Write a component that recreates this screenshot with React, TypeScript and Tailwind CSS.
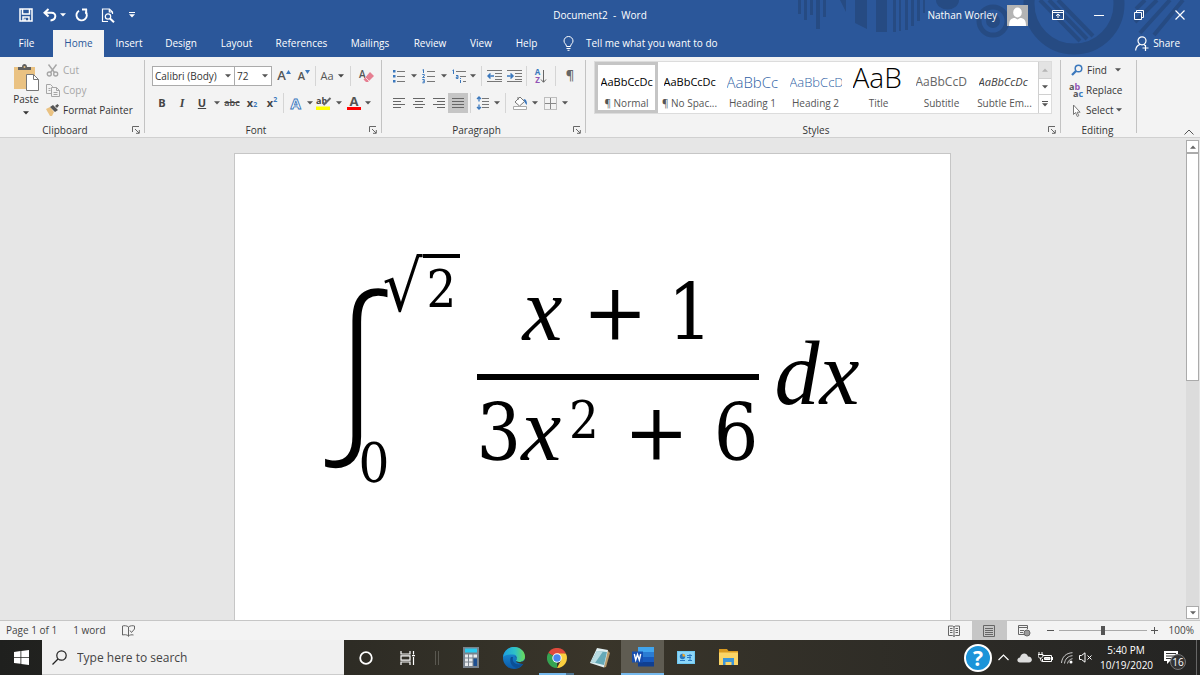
import type { ReactNode } from "react";

function Caret({ className = "" }: { className?: string }) {
  return (
    <svg className={className} width="6" height="4" viewBox="0 0 6 4" fill="currentColor" aria-hidden="true">
      <path d="M0 .3h6L3 3.6z" />
    </svg>
  );
}

function CaretButton({ label, w = "w-2.5" }: { label: string; w?: string }) {
  return (
    <button aria-label={label} className={`flex h-5 shrink-0 items-center justify-center text-[#555] ${w}`}>
      <Caret />
    </button>
  );
}

function Tool({ label, children, className = "w-5" }: { label: string; children: ReactNode; className?: string }) {
  return (
    <button aria-label={label} className={`flex h-5 shrink-0 items-center justify-center text-[#444] ${className}`}>
      {children}
    </button>
  );
}

function Sep({ className = "mx-1" }: { className?: string }) {
  return <span className={`h-5 w-px shrink-0 bg-[#d5d5d5] ${className}`} />;
}

function Launcher({ label }: { label: string }) {
  return (
    <button aria-label={label} className="flex h-3 w-3 items-center justify-center text-[#666]">
      <svg width="8" height="8" viewBox="0 0 8 8" fill="none" stroke="currentColor" aria-hidden="true">
        <path d="M.5 6V.5H7M3 3l4 4M7.3 4v3.3H4" />
      </svg>
    </button>
  );
}

function Group({ name, launcher = true, className, children }: { name: string; launcher?: boolean; className: string; children: ReactNode }) {
  return (
    <section aria-label={name} className={`flex shrink-0 pt-[3px] ${className}`}>
      <div className="flex min-w-0 grow flex-col">
        <div className="h-16 shrink-0">{children}</div>
        <div className="flex h-3 shrink-0 items-center">
          <span className="grow text-center text-[10px] leading-3 font-medium text-[#333]">{name}</span>
          {launcher && <Launcher label={`${name} settings`} />}
        </div>
      </div>
      <span className="mb-1 ml-0.5 w-px bg-[#c3c3c3]" />
    </section>
  );
}

const tabs = [
  { name: "File", w: "w-[53px]" },
  { name: "Home", w: "w-[51px]" },
  { name: "Insert", w: "w-[50px]" },
  { name: "Design", w: "w-[54px]" },
  { name: "Layout", w: "w-[57px]" },
  { name: "References", w: "w-[73px]" },
  { name: "Mailings", w: "w-[64px]" },
  { name: "Review", w: "w-[56px]" },
  { name: "View", w: "w-[46px]" },
  { name: "Help", w: "w-[45px]" },
];

function HeaderArt() {
  return (
    <svg className="absolute top-0 right-0 h-[56px] w-[410px]" viewBox="790 0 410 56" aria-hidden="true">
      <g fill="#264b83">
        <path d="M798 0h3v14h-3zM804 0h3v20h-3zM810 0h3v15h-3zM816 0h4v29h-4zM823 0h3v17h-3zM840 0l6 12V0zM855 0h12v29l-12-6zM876 0h11v32h-11zM893 0h3v32h-3zM899 0h2v31h-2zM905 0h3v30h-3zM911 0h3v26h-3zM917 0h3v21h-3zM923 0h2v13h-2z" />
        <path d="M936 0h23a11 9 0 0 1-23 0z" />
        <circle cx="993" cy="21" r="7" />
      </g>
      <g fill="none" stroke="#264b83">
        <circle cx="993" cy="21" r="14" strokeWidth="5" />
        <circle cx="1074" cy="4" r="45" strokeWidth="11" />
        <path strokeWidth="4" d="M1040 0l40 41M1049 0l38 39M1058 0l35 36M1145 0l-9 9M1157 0l-22 22M1170 0l-30 33M1183 0l-29 35" />
      </g>
    </svg>
  );
}

function TitleBar() {
  return (
    <div className="relative flex h-[30px] items-center">
      <div className="flex grow basis-0 items-center">
        <button aria-label="Save" className="ml-4 flex w-5 justify-center">
          <svg width="14" height="14" viewBox="0 0 14 14" fill="none" stroke="white" strokeWidth="1.5">
            <path d="M1 1h12v12H1zM3.5 1v5h7V1" />
            <path d="M4 13V9h6v4M6 10.5V13" />
          </svg>
        </button>
        <button aria-label="Undo" className="ml-1.5 flex w-4 justify-center">
          <svg width="14" height="14" viewBox="0 0 14 14" fill="none" stroke="white" strokeWidth="2">
            <path d="M5.5 1 1.5 4.8 5.5 8.5M2 4.8h6.5c5.5 0 5 7-1 7.7" />
          </svg>
        </button>
        <button aria-label="Undo history" className="flex w-2.5 justify-center"><Caret /></button>
        <button aria-label="Redo" className="ml-1.5 flex w-4 justify-center">
          <svg width="14" height="14" viewBox="0 0 14 14" fill="none" stroke="white" strokeWidth="1.9">
            <path d="M4 2.7a5.2 5.2 0 1 0 6.5 1" /><path d="M7 1.5h5M11.2 1v5" />
          </svg>
        </button>
        <button aria-label="Print Preview" className="ml-2.5 flex w-4 justify-center">
          <svg width="14" height="15" viewBox="0 0 14 15" fill="none" stroke="white" strokeWidth="1.2">
            <path d="M11.5 6V4L8.5 1H1.5v12.5H7M8.3 1v3h3" /><circle cx="7" cy="8.5" r="2.7" /><path strokeWidth="2" d="M9 10.5l4 3.8" />
          </svg>
        </button>
        <button aria-label="Customize Quick Access Toolbar" className="ml-2.5 flex w-3 flex-col items-center gap-px">
          <span className="h-px w-1.5 bg-white" /><Caret />
        </button>
      </div>
      <h1 className="text-[10px] font-medium whitespace-pre">Document2  -  Word</h1>
      <div className="flex grow basis-0 items-center justify-end">
        <span className="text-[10px] font-medium">Nathan Worley</span>
        <svg className="ml-2.5" width="21" height="21" viewBox="0 0 21 21" aria-label="Account">
          <path fill="#b4b4b4" d="M0 0h21v21H0z" />
          <ellipse cx="10.5" cy="7.5" rx="4.3" ry="5" fill="white" />
          <path fill="white" d="M2 21c0-6 2-8 6-8l2.5 1.5L13 13c4 0 6 2 6 8z" />
        </svg>
        <button aria-label="Ribbon Display Options" className="ml-5 flex w-5 justify-center">
          <svg width="12" height="10" viewBox="0 0 12 10" fill="none" stroke="white"><path d="M.5.5h11v9H.5zM.5 2.5h11M6 8V4M4 5.8 6 4l2 1.8" /></svg>
        </button>
        <button aria-label="Minimize" className="ml-[21px] flex w-5 justify-center"><span className="h-px w-[10px] bg-white" /></button>
        <button aria-label="Restore" className="ml-5 flex w-5 justify-center">
          <svg width="10" height="10" viewBox="0 0 10 10" fill="none" stroke="white"><path d="M.5 2.5h7v7h-7zM2.5 2V.5h7v7H8" /></svg>
        </button>
        <button aria-label="Close" className="mr-2.5 ml-[21px] flex w-5 justify-center">
          <svg width="10" height="10" viewBox="0 0 10 10" fill="none" stroke="white" strokeWidth="1.2"><path d="M.5.5l9 9M9.5.5l-9 9" /></svg>
        </button>
      </div>
    </div>
  );
}

function TabBar() {
  return (
    <nav className="relative flex h-[27px] items-stretch text-[10px] font-medium" aria-label="Ribbon tabs">
      {tabs.map((t) => (
        <button key={t.name} className={`shrink-0 whitespace-nowrap ${t.w} ${t.name === "Home" ? "bg-[#f3f3f3] text-[#2b579a]" : "text-white"}`}>
          {t.name}
        </button>
      ))}
      <button className="ml-3.5 flex items-center gap-3 whitespace-nowrap">
        <svg width="11" height="15" viewBox="0 0 11 15" fill="none" stroke="white"><path d="M3.5 10.5C3.5 8 1 7.5 1 5a4.5 4.5 0 0 1 9 0c0 2.5-2.5 3-2.5 5.5zM3.5 12.5h4M4.5 14.3h2" /></svg>
        Tell me what you want to do
      </button>
      <button className="mr-5 ml-auto flex items-center gap-1">
        <svg width="14" height="15" viewBox="0 0 14 15" fill="none" stroke="white" strokeWidth="1.2"><circle cx="7" cy="4.8" r="4" /><path d="M.6 14.5c.3-3 2-5.5 4.5-6.2M9 8.5l1 1M10.5 9v6M7.5 12h6" /></svg>
        Share
      </button>
    </nav>
  );
}

function ClipboardGroup() {
  return (
    <Group name="Clipboard" className="w-[145px]">
      <div className="flex text-[10px] font-medium text-[#333]">
        <button className="ml-3 flex w-7 flex-col items-center">
          <svg className="mt-1 shrink-0" width="26" height="27" viewBox="0 0 26 27">
            <path fill="#eac282" d="M1 3h21v22H1z" />
            <path fill="#5f5f5f" d="M5 6V3h4c0-4 5-4 5 0h4v3z" /><circle cx="11.5" cy="3" r="1" fill="#eac282" />
            <path fill="white" stroke="#777" d="M13.5 10.5h7l5 5v11h-12z" /><path fill="none" stroke="#777" d="M20.5 10.5v5h5" />
          </svg>
          <span className="leading-4">Paste</span>
          <Caret className="mt-1 shrink-0" />
        </button>
        <div className="ml-1.5 flex flex-col whitespace-nowrap">
          <button className="flex h-5 items-center gap-1 text-[#a6a6a6]">
            <svg width="13" height="13" viewBox="0 0 12 13" fill="none" stroke="#a6a6a6" strokeWidth="1.4"><path d="M2 .5l6 8M10 .5l-6 8" /><circle cx="2.8" cy="10" r="2" /><circle cx="9.2" cy="10" r="2" /></svg>
            Cut
          </button>
          <button className="flex h-5 items-center gap-[3px] text-[#a6a6a6]">
            <svg width="14" height="13" viewBox="0 0 14 13" fill="none" stroke="#a6a6a6"><path d="M5 9.5H.5v-9h4l2 2V3M5.5 3.5h5l3 3v6h-8zM10.5 3.5v3h3M2.5 4.5h2M2.5 6.5h2M7.5 8.5h4M7.5 10.5h4" /></svg>
            Copy
          </button>
          <button className="flex h-5 items-center gap-1">
            <svg width="13" height="12" viewBox="0 0 13 12"><path fill="#eac282" d="M0 5l4-2 4 5-2 4H4z" /><path fill="#555" d="M4 3l3-2 5 5-3 2zM9 2l2.5-2L13 1.5 11 4z" /></svg>
            Format Painter
          </button>
        </div>
      </div>
    </Group>
  );
}

function Combo({ label, value, className }: { label: string; value: string; className: string }) {
  return (
    <span className={`relative flex h-5 items-center ${className}`}>
      <select aria-label={label} className="h-5 w-full appearance-none border border-[#ababab] bg-white pl-0.5 text-[10px] leading-4 font-medium text-[#333]" defaultValue={value}>
        <option>{value}</option>
      </select>
      <Caret className="pointer-events-none absolute right-1 text-[#555]" />
    </span>
  );
}

function FontGroup() {
  return (
    <Group name="Font" className="w-[237px]">
      <div className="flex h-full flex-col gap-[7px] pt-1.5 pl-[7px]">
        <div className="flex items-center">
          <Combo label="Font" value="Calibri (Body)" className="w-[83px]" />
          <Combo label="Font size" value="72" className="-ml-px w-[38px]" />
          <Tool label="Grow font" className="ml-0.5 w-5">
            <span className="text-[13px] font-semibold text-[#555]">A</span>
            <svg className="mb-2" width="5" height="4" viewBox="0 0 5 4" fill="#3b78bd"><path d="M0 4h5L2.5 0z" /></svg>
          </Tool>
          <Tool label="Shrink font">
            <span className="text-[11px] font-semibold text-[#555]">A</span>
            <svg className="mb-2" width="5" height="4" viewBox="0 0 5 4" fill="#3b78bd"><path d="M0 0h5L2.5 4z" /></svg>
          </Tool>
          <Sep className="mr-1 ml-px" />
          <Tool label="Change case" className="w-6 gap-1"><span className="text-[11px] font-medium text-[#555]">Aa</span><Caret className="shrink-0" /></Tool>
          <Sep className="mx-1.5" />
          <Tool label="Clear formatting">
            <svg className="overflow-visible" width="14" height="14" viewBox="0 0 14 14"><text x="-1" y="9" fontSize="10" fontWeight="600" fill="#555" fontFamily="Open Sans">A</text><path fill="#e67f91" d="M10 3l4 4-6 6H6L3.5 10.5z" /><path stroke="white" strokeWidth=".7" d="M5.5 8.5l4 4" /></svg>
          </Tool>
        </div>
        <div className="flex items-center">
          <Tool label="Bold"><b className="text-[11px]">B</b></Tool>
          <Tool label="Italic"><i className="font-['Liberation_Serif',serif] text-[12px] font-bold">I</i></Tool>
          <Tool label="Underline"><u className="text-[11px] font-bold">U</u></Tool>
          <CaretButton label="Underline style" />
          <Tool label="Strikethrough"><s className="text-[9px] font-semibold">abc</s></Tool>
          <Tool label="Subscript"><b className="text-[11px]">x</b><sub className="text-[7px] font-bold text-[#3b78bd]">2</sub></Tool>
          <Tool label="Superscript"><b className="text-[11px]">x</b><sup className="text-[7px] font-bold text-[#3b78bd]">2</sup></Tool>
          <Sep className="mr-0.5 ml-px" />
          <Tool label="Text effects">
            <svg className="overflow-visible" width="15" height="16" viewBox="0 0 15 16"><text x="1.5" y="13.5" fontSize="15" fontWeight="bold" fill="white" stroke="#3b78bd" strokeWidth=".9" fontFamily="Open Sans">A</text></svg>
          </Tool>
          <CaretButton label="Text effects options" w="w-2" />
          <Tool label="Highlight">
            <svg className="overflow-visible" width="16" height="16" viewBox="0 0 16 16"><text x="0" y="8.5" fontSize="9" fontWeight="bold" fill="#444" fontFamily="Open Sans">ab</text><path stroke="#666" strokeWidth="2" d="M14.5 3l-7 7" /><path fill="#ff0" d="M0 11.5h14v3.5H0z" /></svg>
          </Tool>
          <CaretButton label="Highlight color" />
          <Tool label="Font color">
            <svg className="overflow-visible" width="15" height="16" viewBox="0 0 15 16"><text x="2.5" y="11" fontSize="13" fontWeight="bold" fill="#555" fontFamily="Open Sans">A</text><path fill="red" d="M0 12h14v3H0z" /></svg>
          </Tool>
          <CaretButton label="Font color options" w="w-2" />
        </div>
      </div>
    </Group>
  );
}

function ListIcon({ numbered }: { numbered?: boolean }) {
  return (
    <svg className="overflow-visible" width="14" height="14" viewBox="0 0 14 14">
      <path stroke="#777" d="M5 2.5h8M5 7.5h8M5 12.5h8" />
      {numbered ? (
        <path fill="none" stroke="#3b78bd" d="M.5 1l1-.5V4M.3 5.5h2v1.3L.5 8.5h2.3M.3 10.5h2v3.3H.3M.8 12.2h1.5" />
      ) : (
        <path fill="#3b78bd" d="M1 1h2.5v2.5H1zM1 6h2.5v2.5H1zM1 11h2.5v2.5H1z" />
      )}
    </svg>
  );
}

function Lines({ d }: { d: string }) {
  return <svg width="14" height="12" viewBox="0 0 14 12" fill="none" stroke="#666"><path d={d} /></svg>;
}

function IndentIcon({ d }: { d: string }) {
  return (
    <svg width="15" height="12" viewBox="0 0 15 12" fill="none">
      <path stroke="#777" d="M0 .5h15M8 3.5h7M8 6.5h7M8 9.5h7M0 11.5h15" />
      <path stroke="#3b78bd" strokeWidth="1.5" d={d} />
    </svg>
  );
}

function ParagraphGroup() {
  return (
    <Group name="Paragraph" className="w-[204px]">
      <div className="flex h-full flex-col gap-[7px] pt-1.5 pl-[7px]">
        <div className="flex items-center">
          <Tool label="Bullets"><ListIcon /></Tool>
          <CaretButton label="Bullet library" />
          <Tool label="Numbering"><ListIcon numbered /></Tool>
          <CaretButton label="Numbering library" />
          <Tool label="Multilevel list">
            <svg width="15" height="14" viewBox="0 0 15 14" fill="none"><path stroke="#777" d="M4 2.5h10M8 7.5h6M11 12.5h3" /><path stroke="#3b78bd" d="M.5 1.5l1-.7V5M4 6.5h2v3H4.3V8H6M8.5 11v3M8.5 9v1" /></svg>
          </Tool>
          <CaretButton label="Multilevel library" w="w-2" />
          <Sep className="mr-0.5 ml-1" />
          <Tool label="Decrease indent"><IndentIcon d="M1 6h6M3.5 3.5 1 6l2.5 2.5" /></Tool>
          <Tool label="Increase indent"><IndentIcon d="M0 6h6M3.5 3.5 6 6 3.5 8.5" /></Tool>
          <Sep className="mr-1 ml-0.5" />
          <Tool label="Sort">
            <span className="flex flex-col text-[8px] leading-[8px] font-bold text-[#3b78bd]"><span>A</span><span className="text-[#9254b5]">Z</span></span>
            <svg width="7" height="15" viewBox="0 0 7 15"><path fill="none" stroke="#666" d="M3.5 1v12M1 10.5l2.5 2.8L6 10.5" /></svg>
          </Tool>
          <Sep className="mx-1" />
          <Tool label="Show paragraph marks"><span className="text-[13px] font-semibold text-[#666]">¶</span></Tool>
        </div>
        <div className="flex items-center">
          <Tool label="Align left"><Lines d="M1 1.5h12M1 4.5h8M1 7.5h12M1 10.5h8" /></Tool>
          <Tool label="Center"><Lines d="M1 1.5h12M3 4.5h8M1 7.5h12M3 10.5h8" /></Tool>
          <Tool label="Align right" className="w-[19px]"><Lines d="M1 1.5h12M5 4.5h8M1 7.5h12M5 10.5h8" /></Tool>
          <Tool label="Justify" className="w-5 bg-[#c5c5c5]"><Lines d="M1 1.5h12M1 4.5h12M1 7.5h12M1 10.5h12" /></Tool>
          <Sep className="mx-0.5" />
          <Tool label="Line spacing">
            <svg width="14" height="14" viewBox="0 0 14 14" fill="none"><path stroke="#777" d="M6 2.5h7M6 5.5h7M6 8.5h7M6 11.5h7" /><path stroke="#3b78bd" strokeWidth="1.3" d="M3 1v4.5M1 3l2-2 2 2M3 8.5V13M1 11l2 2 2-2" /></svg>
          </Tool>
          <CaretButton label="Spacing options" w="w-2" />
          <Sep className="mx-1" />
          <Tool label="Shading">
            <svg width="15" height="14" viewBox="0 0 15 14" fill="none"><path fill="white" stroke="#777" d="M2 6l5-5 4.5 4.5-5 4.5zM5 4V1" /><path fill="#3b78bd" d="M10.5 3c3 0 3.5 3 3.5 6l-2-2z" /><path fill="white" stroke="#aaa" d="M.5 10.5h13v3H.5z" /></svg>
          </Tool>
          <CaretButton label="Shading color" />
          <Tool label="Borders">
            <svg width="13" height="13" viewBox="0 0 13 13" fill="none" stroke="#888"><path strokeDasharray="1 1" d="M.5.5h12v12H.5z" /><path d="M6.5 1v11M1 6.5h11" /></svg>
          </Tool>
          <CaretButton label="Border options" />
        </div>
      </div>
    </Group>
  );
}

const styles = [
  { name: "¶ Normal", sample: "AaBbCcDc", look: "pt-1.5 text-[11px] leading-[22px] font-medium text-black" },
  { name: "¶ No Spac...", sample: "AaBbCcDc", look: "pt-1.5 text-[11px] leading-[22px] font-medium text-black" },
  { name: "Heading 1", sample: "AaBbCc", look: "pt-1.5 text-[15px] leading-[22px] font-light text-[#2f5fa5]" },
  { name: "Heading 2", sample: "AaBbCcD", look: "pt-1.5 text-[13px] leading-[22px] font-light text-[#2f5fa5]" },
  { name: "Title", sample: "AaB", look: "text-[28px] leading-6 font-light text-black" },
  { name: "Subtitle", sample: "AaBbCcD", look: "pt-1.5 text-[12px] leading-[22px] text-[#666]" },
  { name: "Subtle Em...", sample: "AaBbCcDc", look: "pt-1.5 text-[11px] leading-[22px] font-medium text-[#404040] italic" },
];

function StylesGroup() {
  return (
    <Group name="Styles" className="w-[475px]">
      <div className="pt-px pl-2">
        <div className="flex h-[53px] w-[458px] border border-[#dcdcdc] bg-white">
          {styles.map((s, i) => (
            <button key={s.name} className={`flex w-[63px] shrink-0 flex-col items-center ${i === 0 ? "border-3 border-[#c5c5c5]" : "border-3 border-transparent"}`}>
              <span className={`h-7 w-[52px] shrink-0 overflow-hidden text-left whitespace-nowrap ${s.look}`}>{s.sample}</span>
              <span className="mt-0.5 text-[10px] leading-4 whitespace-nowrap text-[#555]">{s.name}</span>
            </button>
          ))}
          <div className="ml-auto flex flex-col border-l border-[#d0d0d0] text-[#555]">
            <button aria-label="Scroll styles up" className="flex w-3 grow items-center justify-center bg-[#e3e3e3] text-[#b5b5b5]"><Caret className="rotate-180" /></button>
            <button aria-label="Scroll styles down" className="flex w-3 grow items-center justify-center border-y border-[#d0d0d0]"><Caret /></button>
            <button aria-label="More styles" className="flex w-3 grow flex-col items-center justify-center gap-px"><span className="h-px w-1.5 bg-[#555]" /><Caret /></button>
          </div>
        </div>
      </div>
    </Group>
  );
}

function EditingGroup() {
  return (
    <Group name="Editing" launcher={false} className="w-[76px]">
      <div className="flex flex-col pl-2 text-[10px] font-medium text-[#333]">
        <button className="flex h-5 items-center">
          <svg className="mr-1 ml-0.5" width="12" height="12" viewBox="0 0 12 12" fill="none" stroke="#3b78bd"><circle cx="7.5" cy="4.5" r="3.3" strokeWidth="1.5" /><path strokeWidth="2.3" d="M5 7l-4 4" /></svg>
          Find<Caret className="ml-2 text-[#555]" />
        </button>
        <button className="flex h-5 items-center gap-[3px]">
          <span aria-hidden="true" className="flex w-3.5 shrink-0 flex-col text-left text-[9px] leading-[7px] font-bold text-[#555]">
            <span>a<span className="text-[#9254b5]">b</span></span>
            <span className="pl-1">a<span className="text-[#3b78bd]">c</span></span>
          </span>
          Replace
        </button>
        <button className="flex h-5 items-center">
          <svg className="mr-[5px] ml-1" width="8" height="13" viewBox="0 0 8 13" fill="white" stroke="#777"><path d="M.5 1v9.5l2-2 1.8 4 1.5-.8-1.7-3.5h3z" /></svg>
          Select<Caret className="ml-0.5 text-[#555]" />
        </button>
      </div>
    </Group>
  );
}

function Variable({ children, className = "" }: { children: ReactNode; className?: string }) {
  return <i className={`font-['Liberation_Serif','Times_New_Roman',serif] text-[90px] ${className}`}>{children}</i>;
}

function Plus() {
  return <span className="font-['DejaVu_Serif',serif]">+</span>;
}

function Equation() {
  return (
    <div role="math" aria-label="Integral from 0 to square root of 2 of (x + 1) / (3x squared + 6) dx" className="flex items-start justify-center pt-[100px] font-['DejaVu_Serif_Condensed','DejaVu_Serif',serif] text-[78px] leading-[80px] text-black">
      <span className="w-[54px] font-['Open_Sans',sans-serif] text-[180px] leading-[204px] font-light">∫</span>
      <div className="flex h-[240px] w-[86px] flex-col justify-between">
        <div className="ml-1 flex items-start text-[52px] leading-[60px]">
          <span className="w-10 text-[70px] leading-[66px]">√</span>
          <span className="border-t-4 border-black px-1 leading-[62px]">2</span>
        </div>
        <span className="-ml-5 text-[54px] leading-[60px]">0</span>
      </div>
      <div className="ml-3 flex w-[282px] flex-col items-stretch pt-4">
        <div className="flex items-baseline justify-center gap-5"><Variable>x</Variable><Plus /><span>1</span></div>
        <span className="mt-[21px] h-1.5 bg-black" />
        <div className="mt-2.5 flex items-baseline justify-between">
          <span className="flex items-baseline">
            <span>3</span>
            <Variable>x</Variable>
            <span className="mb-6 ml-2 self-end text-[52px] leading-[60px]">2</span>
          </span>
          <Plus />
          <span>6</span>
        </div>
      </div>
      <Variable className="ml-4 pt-[80px]">dx</Variable>
    </div>
  );
}

function Workspace() {
  return (
    <main className="flex grow bg-[#e6e6e6]">
      <div className="flex grow justify-center pt-[15px] pr-0.5">
        <article className="w-[717px] border border-b-0 border-[#c6c6c6] bg-white"><Equation /></article>
      </div>
      <div className="flex w-3.5 shrink-0 flex-col pt-0.5 pb-px pr-px text-[#666]">
        <button aria-label="Scroll up" className="flex h-[13px] items-center justify-center border border-[#ababab] bg-white"><Caret className="rotate-180" /></button>
        <span className="h-[228px] border border-[#ababab] bg-white" />
        <span className="grow bg-[#dcdcdc]" />
        <button aria-label="Scroll down" className="flex h-[13px] items-center justify-center border border-[#ababab] bg-white"><Caret /></button>
      </div>
    </main>
  );
}

function StatusBar() {
  return (
    <footer className="flex h-5 items-center border-t border-[#c6c6c6] bg-[#f3f3f3] text-[10px] text-[#444]">
      <span className="ml-1.5">Page 1 of 1</span>
      <span className="ml-4">1 word</span>
      <button aria-label="Proofing" className="ml-4">
        <svg width="13" height="12" viewBox="0 0 13 12" fill="none" stroke="#666"><path d="M6.5 2v9.5M6.5 2C5 .5 2 .5.5 1v9c2-.5 4.5-.5 6 1 1-1 3-1.5 5-1M6.5 2C8 .5 11 .5 12.5 1v3M8 5.5l1.5 2L12.5 4" /></svg>
      </button>
      <div className="ml-auto flex h-full items-center">
        <button aria-label="Read mode" className="flex w-9 justify-center">
          <svg width="12" height="12" viewBox="0 0 12 12" fill="none" stroke="#666"><path d="M6 1.5v10M.5 1h4L6 2l1.5-1h4v9.5h-4L6 11.5l-1.5-1h-4zM2 3.5h2.5M2 5.5h2.5M2 7.5h2.5M7.5 3.5H10M7.5 5.5H10M7.5 7.5H10" /></svg>
        </button>
        <button aria-label="Print layout" className="flex h-full w-[35px] items-center justify-center bg-[#c6c6c6]">
          <svg width="12" height="12" viewBox="0 0 12 12" fill="none" stroke="#666"><path d="M.5.5h11v11H.5zM2 3.5h8M2 5.5h8M2 7.5h8M2 9.5h8" /></svg>
        </button>
        <button aria-label="Web layout" className="flex w-9 justify-center">
          <svg width="13" height="12" viewBox="0 0 13 12" fill="none" stroke="#666"><path d="M6 9.5H.5v-9h9V4M.5 2.5h9M2 5.5h4M2 7.5h3" /><circle cx="9" cy="8" r="3" fill="#999" /></svg>
        </button>
        <button aria-label="Zoom out" className="ml-0.5 flex w-3 justify-center"><span className="h-px w-[7px] bg-[#555]" /></button>
        <input
          type="range" aria-label="Zoom" defaultValue={50}
          className="mx-0.5 h-3 w-[88px] appearance-none bg-transparent [&::-webkit-slider-runnable-track]:h-px [&::-webkit-slider-runnable-track]:bg-[#aaa] [&::-webkit-slider-thumb]:-mt-1 [&::-webkit-slider-thumb]:h-[9px] [&::-webkit-slider-thumb]:w-1 [&::-webkit-slider-thumb]:appearance-none [&::-webkit-slider-thumb]:bg-[#555]"
        />
        <button aria-label="Zoom in" className="flex w-3 justify-center">
          <svg width="7" height="7" viewBox="0 0 7 7" stroke="#555"><path d="M0 3.5h7M3.5 0v7" /></svg>
        </button>
        <span className="mr-1.5 ml-2">100%</span>
      </div>
    </footer>
  );
}

function PinnedApp({ label, children, className = "" }: { label: string; children: ReactNode; className?: string }) {
  return <button aria-label={label} className={`flex w-[43px] shrink-0 items-center justify-center ${className}`}>{children}</button>;
}

function Taskbar() {
  return (
    <div className="flex h-[35px] bg-linear-to-r from-[#1f201e] via-[#39352a] to-[#242423] text-white">
      <button aria-label="Start" className="flex w-[42px] shrink-0 items-center justify-center">
        <svg width="15" height="15" viewBox="0 0 15 15" fill="white"><path d="M0 2l6.5-1v6H0zM7.3.9 15 0v7H7.3zM0 7.8h6.5v6L0 13zM7.3 7.8H15V15l-7.7-1z" /></svg>
      </button>
      <label className="flex w-[302px] shrink-0 items-center border-b border-[#ccc] bg-[#f0f0f0] pl-2.5">
        <svg width="15" height="15" viewBox="0 0 15 15" fill="none" stroke="#222" strokeWidth="1.2"><circle cx="9.5" cy="5.5" r="4.7" /><path d="M6 9l-5.5 5.5" /></svg>
        <input aria-label="Search" placeholder="Type here to search" className="ml-2.5 grow bg-transparent pt-0.5 text-[12px] font-medium outline-none placeholder:text-[#444]" />
      </label>
      <PinnedApp label="Cortana"><svg width="14" height="14" viewBox="0 0 14 14" fill="none" stroke="white" strokeWidth="1.8"><circle cx="7" cy="7" r="5.8" /></svg></PinnedApp>
      <PinnedApp label="Task View" className="-ml-px">
        <svg width="15" height="14" viewBox="0 0 15 14" fill="none" stroke="white" strokeWidth="1.2"><path d="M1 0v3h9V0M1 4.8h9v4.4H1zM1 14v-3h9v3M13.5 0v3.5M13.5 6v8M12 4.7h3" /></svg>
      </PinnedApp>
      <span className="mr-2.5 ml-1.5 h-3.5 w-1 shrink-0 self-center border-x border-[#5a5850]" />
      <PinnedApp label="Calculator">
        <svg width="16" height="21" viewBox="0 0 16 21"><path fill="#78828c" d="M0 0h16v21H0z" /><path fill="#2bc9ee" d="M2 1.5h12v4H2z" /><path fill="#e8ebee" d="M2 7.5h3v3H2zM6 7.5h3.5v3H6zM10.5 7.5H14v3h-3.5zM2 11.5h3v3H2zM6 11.5h3.5v3H6zM2 15.5h3v3.5H2zM6 15.5h3.5V19H6z" /><path fill="#1d4f91" d="M10.5 11.5H14V19h-3.5z" /></svg>
      </PinnedApp>
      <PinnedApp label="Edge">
        <svg width="22" height="22" viewBox="0 0 22 22">
          <defs>
            <linearGradient id="edgeTop" x1="0" x2="1"><stop stopColor="#1c9ee0" /><stop offset=".55" stopColor="#2fc2c6" /><stop offset="1" stopColor="#6cdc55" /></linearGradient>
            <linearGradient id="edgeLow" x1="0" y1="0" x2="0" y2="1"><stop stopColor="#1f9be0" /><stop offset="1" stopColor="#0b59a8" /></linearGradient>
          </defs>
          <circle cx="11" cy="11" r="11" fill="url(#edgeLow)" />
          <path fill="url(#edgeTop)" d="M0 10C1 4 5.5 0 11 0c6.5 0 11 4.500 11 9.500 0 4-3 5.500-6 5.500-2 0-3.500-.7-3-1.500 1.800-2 1-6-3-6C6 7.500 2 8 0 10z" />
          <path fill="#0c4f96" d="M8 10c-2 4 0 10 6 11 3-.5 6-3 7-5-3 2-8 2-10-.5-1.500-1.700-1.500-3.700-1-5.500z" />
          <path fill="#38352b" d="M11.500 9.500c2-.5 2.500 2 1.500 4-1 2.500 4.500 3 7.800 3.700C23 14 22 12 22 12c-1.500 3-4 3-6 3-2 0-3.500-.7-3-1.500 1-1.200 1-3-1.500-4z" />
        </svg>
      </PinnedApp>
      <PinnedApp label="Chrome" className="relative">
        <svg width="20" height="20" viewBox="0 0 20 20">
          <path fill="#e04a3c" d="M10 10 1.300 5A10 10 0 0 1 18.700 5z" /><path fill="#35a352" d="M10 10v10A10 10 0 0 1 1.300 5z" />
          <path fill="#fbcf3f" d="M10 5.500h8.900A10 10 0 0 1 10 20l4-7.700z" /><circle cx="10" cy="10" r="4.700" fill="white" /><circle cx="10" cy="10" r="3.700" fill="#4a87ee" />
        </svg>
        <span className="absolute bottom-0 left-1 h-0.5 w-[35px] border-r-8 border-[#4f7591] bg-[#76b9ed]" />
      </PinnedApp>
      <PinnedApp label="Notepad">
        <svg width="20" height="20" viewBox="0 0 20 20"><path fill="#b79a6a" d="M17 2l3 3-4 14-2 .5z" /><path fill="#e1f0f2" d="M7 0l11 2-4 17.500L0 15z" /><path fill="#65a9b7" d="M7 3l10 1-3 13L1 14z" /><path fill="#b9dce2" d="M7 3l6 .6L5 15 1 14z" /></svg>
      </PinnedApp>
      <PinnedApp label="Word" className="border-b-2 border-[#76b9ed] bg-[#5f5c52]">
        <svg width="22" height="20" viewBox="0 0 22 20"><path fill="#41a5ee" d="M6 0h16v5H6z" /><path fill="#2b7cd3" d="M6 5h16v5H6z" /><path fill="#185abd" d="M6 10h16v5H6z" /><path fill="#103f91" d="M6 15h16v4.500H6z" /><path fill="#174fb0" d="M0 4.500h11v11H0z" /><path fill="none" stroke="white" strokeWidth="1.4" d="M2.300 7l1.400 6L5.500 7.500 7.300 13l1.400-6" /></svg>
      </PinnedApp>
      <PinnedApp label="Control Panel">
        <svg width="18" height="13" viewBox="0 0 18 13"><path fill="#6fc9f2" d="M0 0h18v13H0z" /><path fill="#8dd6f8" d="M1 1h16v11H1z" /><circle cx="5.500" cy="5.500" r="2.700" fill="#2878c0" /><path fill="#f5a623" d="M5.500 5.500V2.800a2.700 2.700 0 0 1 2.700 2.700z" /><path stroke="#2878c0" d="M10 4.500h5M10 6.500h4M13 3v7M11 9.500h4M3 9.500h5" /></svg>
      </PinnedApp>
      <PinnedApp label="File Explorer">
        <svg width="19" height="17" viewBox="0 0 19 17"><path fill="#d99a20" d="M0 0h8l1.500 2H19v5H0z" /><path fill="#fbd566" d="M0 3.500h19V16H0z" /><path fill="#3c95d8" d="M4 9h11v7h-2.500v-3h-6v3H4z" /></svg>
      </PinnedApp>
      <div className="ml-auto flex items-center">
        <button aria-label="Help" className="flex h-7 w-7 items-center justify-center rounded-full border-2 border-white bg-[#1c94d9] text-[21px] leading-6 font-bold">?</button>
        <button aria-label="Show hidden icons" className="ml-1.5"><svg width="11" height="7" viewBox="0 0 11 7" fill="none" stroke="white" strokeWidth="1.2"><path d="M.5 6l5-5 5 5" /></svg></button>
        <button aria-label="OneDrive" className="ml-2"><svg width="15" height="10" viewBox="0 0 15 10" fill="#ddd"><path d="M3 9.500C-.5 9.500-.5 5 3 4.500 4-.5 10-.5 11 3.500c5 .2 5 6 1 6z" /></svg></button>
        <button aria-label="Battery" className="ml-1.5"><svg width="15" height="11" viewBox="0 0 15 11" fill="none" stroke="white"><path d="M5 3.500h8.500v6H4.500V7M14.500 5v3M1 0v2M4 0v2M0 2.500h5c0 3-1 3.500-2.500 3.500S0 5.500 0 2.500M2.500 6c0 3 1 3.500 2 3.500" /><path fill="#ddd" d="M6.500 5.500H12v2H6.500z" /></svg></button>
        <button aria-label="Wi-Fi" className="ml-2"><svg width="12" height="12" viewBox="0 0 12 12" fill="none" stroke="#ccc"><path d="M.5 11C1 5 5 1 11.500.7M3.500 11.500C4 7 7 4 11.500 3.700M6.500 11.500C7 9 9 7 11.500 6.700" /><circle cx="10" cy="10" r="1.500" fill="white" stroke="none" /></svg></button>
        <button aria-label="Volume muted" className="ml-1.5"><svg width="13" height="11" viewBox="0 0 13 11" fill="none" stroke="white"><path d="M.5 3.500h2L6 .8v9.400L2.500 7.500h-2zM8.500 3.500l4 4M12.500 3.500l-4 4" /></svg></button>
        <button className="ml-2 w-[52px] text-center text-[10px] leading-[15px]">5:40 PM<br />10/19/2020</button>
        <button aria-label="Notifications" className="relative ml-3 h-6 w-[22px]">
          <svg width="14" height="13" viewBox="0 0 14 13"><path fill="white" d="M0 0h14v10H6l-3 3v-3H0z" /><path stroke="#333" d="M2 2.500h10M2 5h10M2 7.500h7" /></svg>
          <span className="absolute right-0 bottom-0 flex h-4 w-4 items-center justify-center rounded-full border border-[#777] bg-[#333] text-[10px] leading-none font-medium">16</span>
        </button>
        <span className="ml-2.5 h-[35px] w-1 border-l border-[#666]" />
      </div>
    </div>
  );
}

export default function App() {
  return (
    <div className="flex min-h-screen flex-col overflow-hidden bg-[#e6e6e6] font-['Open_Sans','Noto_Sans',sans-serif]">
      <header className="relative bg-[#2b579a] text-white">
        <HeaderArt />
        <TitleBar />
        <TabBar />
      </header>
      <div className="flex h-[81px] border-b border-[#d0d0d0] bg-[#f3f3f3]">
        <ClipboardGroup />
        <FontGroup />
        <ParagraphGroup />
        <StylesGroup />
        <EditingGroup />
        <button aria-label="Collapse ribbon" className="mt-auto mr-1.5 mb-0.5 ml-auto">
          <svg width="10" height="6" viewBox="0 0 10 6" fill="none" stroke="#555"><path d="M.5 5.500l4.500-4.500 4.500 4.500" /></svg>
        </button>
      </div>
      <Workspace />
      <StatusBar />
      <Taskbar />
    </div>
  );
}
